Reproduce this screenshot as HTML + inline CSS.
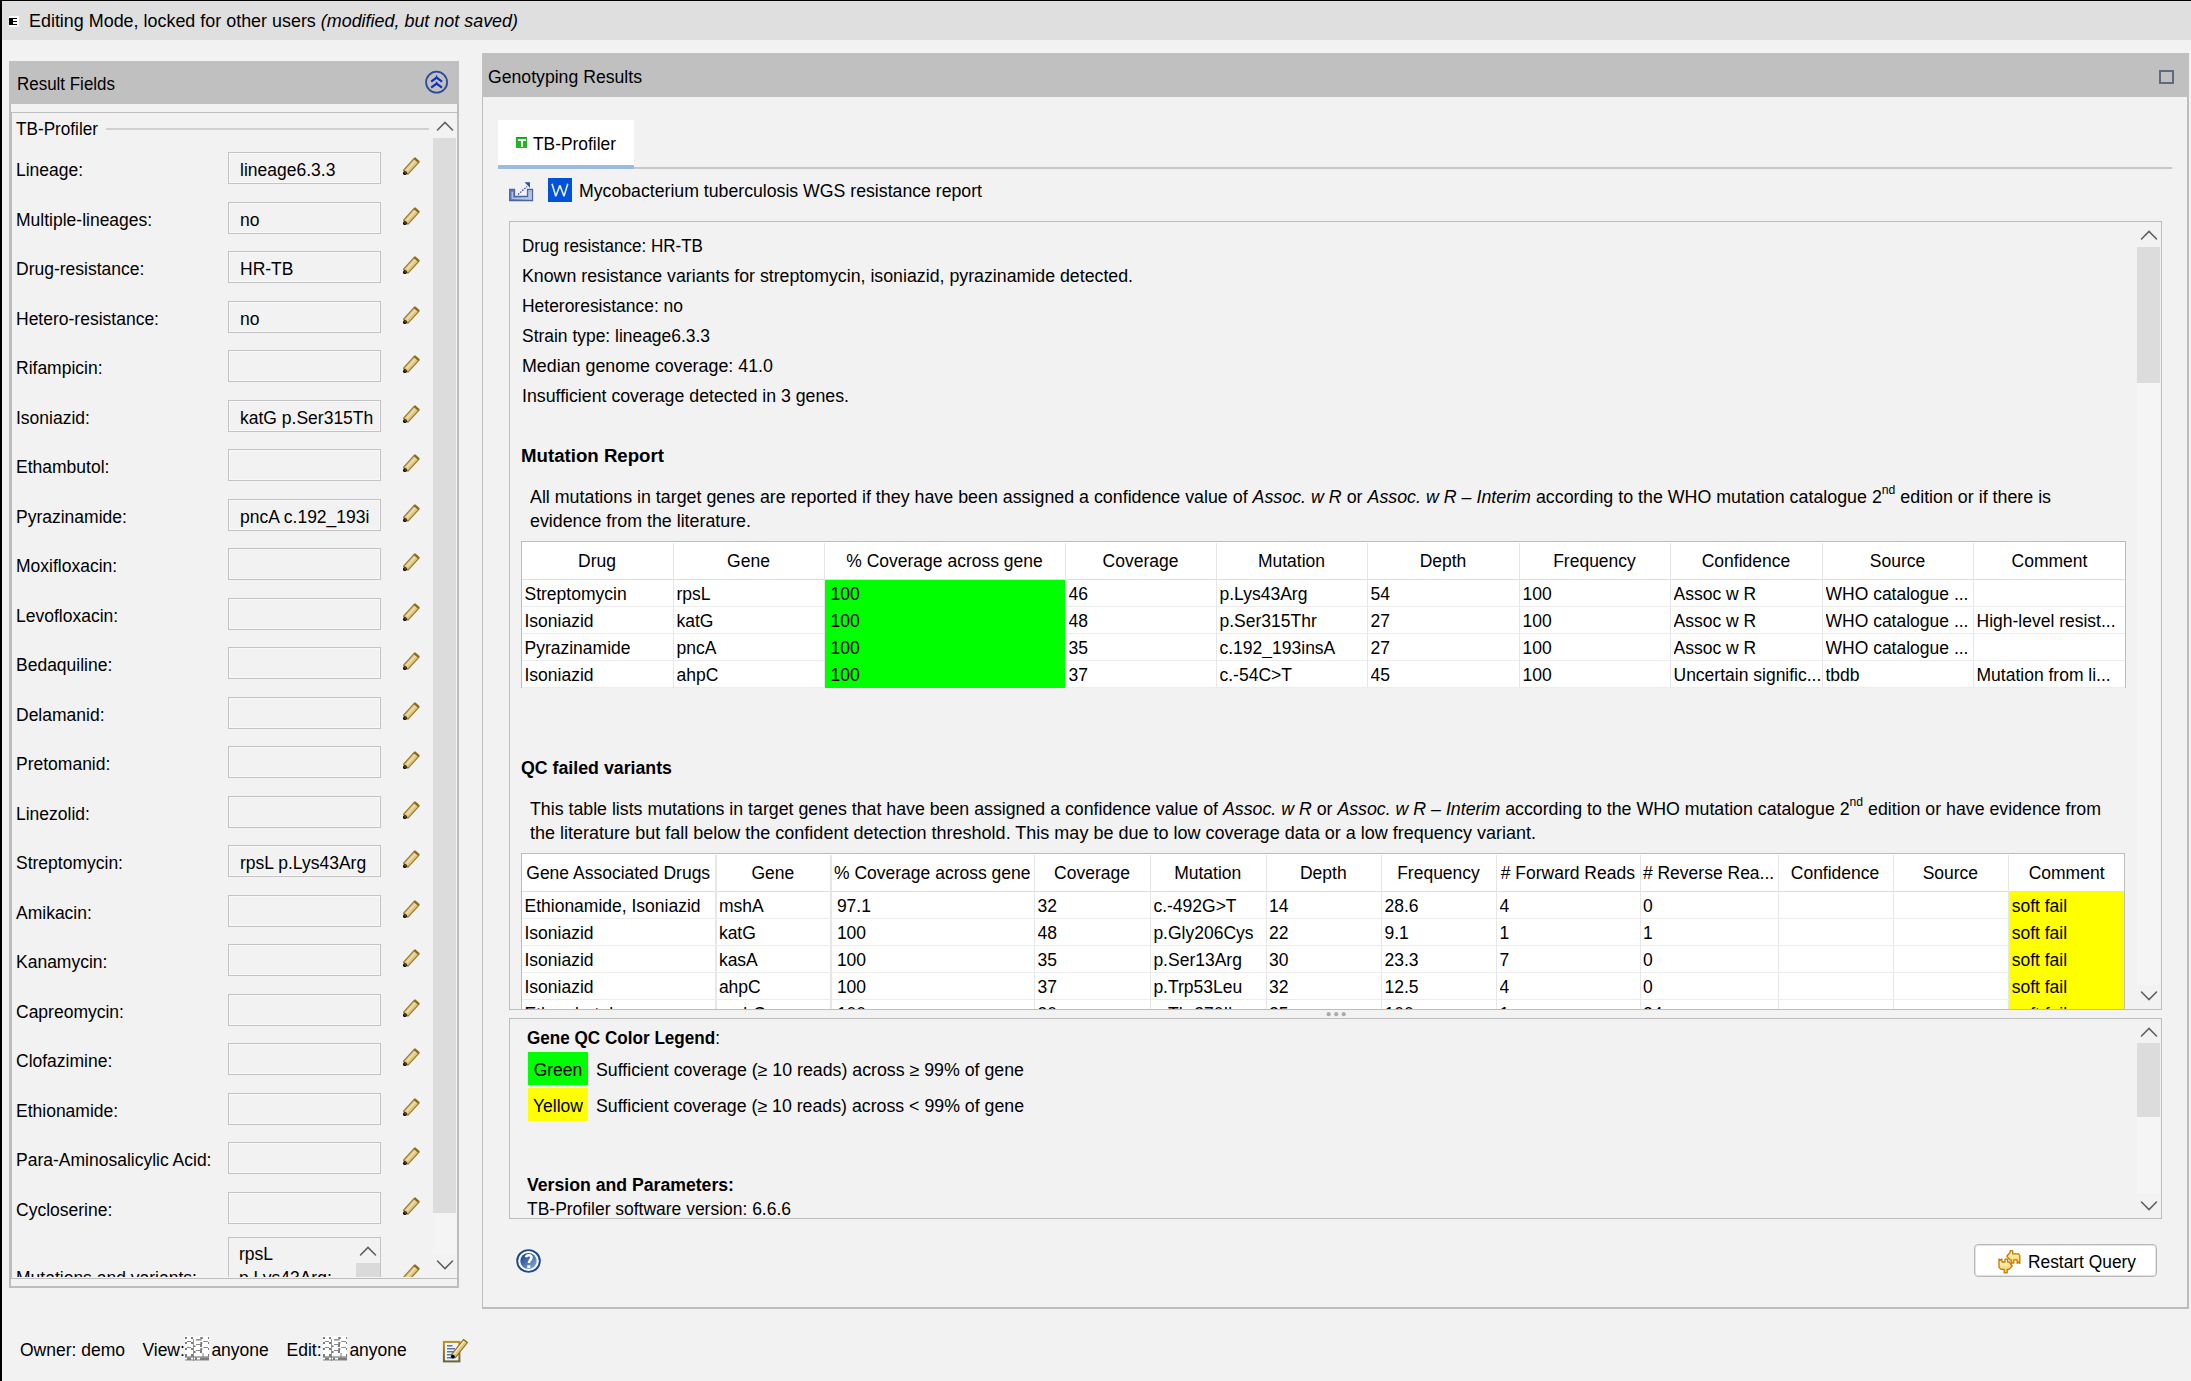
<!DOCTYPE html><html><head><meta charset="utf-8"><style>
*{box-sizing:border-box}
html,body{margin:0;padding:0}
body{width:2191px;height:1381px;overflow:hidden;background:#f2f2f2;position:relative;font-family:"Liberation Sans",sans-serif;font-size:17.5px;color:#000}
.t{position:absolute;white-space:nowrap;line-height:20px}
.r{position:absolute}
.ab{position:absolute}
b{font-weight:bold}
</style></head><body><div class="r" style="left:0px;top:0px;width:2191px;height:1px;background:#000"></div>
<div class="r" style="left:0px;top:0px;width:2px;height:1381px;background:#000"></div>
<div class="r" style="left:2px;top:1px;width:2189px;height:39px;background:#dfdfdf"></div>
<svg class="ab" style="left:9px;top:16px" width="10" height="11" viewBox="0 0 10 11" shape-rendering="crispEdges"><rect width="10" height="11" fill="#fff"/><rect x="0" y="2" width="8" height="7" fill="#000"/><rect x="4" y="3" width="4" height="2" fill="#fff"/><rect x="4" y="6" width="4" height="2" fill="#fff"/></svg>
<div class="t" style="left:28.5px;top:11.0px;transform:scaleX(1.0238);transform-origin:0 0;">Editing Mode, locked for other users <i>(modified, but not saved)</i></div>
<div class="r" style="left:9px;top:61px;width:450px;height:43px;background:#c0c0c0"></div>
<div class="t" style="left:16.5px;top:74.0px;transform:scaleX(0.9688);transform-origin:0 0;">Result Fields</div>
<svg class="ab" style="left:424px;top:70px" width="25" height="25" viewBox="0 0 25 25"><circle cx="12.6" cy="12.2" r="10.5" fill="none" stroke="#2c4a98" stroke-width="1.8"/><path d="M7.2 11.6 L12.6 7.6 L18 11.6 M7.2 17.6 L12.6 13.6 L18 17.6" fill="none" stroke="#0a30c0" stroke-width="2.1"/><path d="M12.6 5.6 V8.6 M12.6 11.8 V14.6" stroke="#0a30c0" stroke-width="1.3"/></svg>
<div class="r" style="left:9px;top:104px;width:2px;height:1184px;background:#bdbdbd"></div>
<div class="r" style="left:457px;top:104px;width:2px;height:1184px;background:#bdbdbd"></div>
<div class="r" style="left:9px;top:1286px;width:450px;height:2px;background:#bdbdbd"></div>
<div class="r" style="left:11px;top:112px;width:446px;height:1px;background:#bdbdbd"></div>
<div class="r" style="left:11px;top:113px;width:1px;height:1166px;background:#bdbdbd"></div>
<div class="r" style="left:11px;top:1278px;width:446px;height:1px;background:#bdbdbd"></div>
<div class="ab" style="left:12px;top:113px;width:445px;height:1164px;overflow:hidden">
<div class="t" style="left:4px;top:6.0px;transform:scaleX(0.9806);transform-origin:0 0;">TB-Profiler</div>
<div class="r" style="left:94px;top:15px;width:323px;height:2px;background:#d0d0d0"></div>
<div class="r" style="left:421px;top:25px;width:23px;height:1075px;background:#dcdcdc"></div>
<div class="r" style="left:421px;top:1100px;width:23px;height:41px;background:#f4f4f4"></div>
<div class="t" style="left:4px;top:47.0px;">Lineage:</div>
<div class="r" style="left:216px;top:39px;width:153px;height:32px;border:1px solid #c3c3c3;box-shadow:inset 0 0 0 1px #f8f8f8"></div>
<div class="t" style="left:228px;top:47.0px;">lineage6.3.3</div>
<div class="ab" style="left:391px;top:44px"><svg width="17" height="19" viewBox="0 0 17 19"><path d="M0.6 13.2 L11.4 1.2 L16 5.2 L5 17.2 Z" fill="#dec583" stroke="#9a7a2c" stroke-width="1.2" stroke-linejoin="round"/><path d="M3.6 13.6 L12.6 3.8" stroke="#f0e0ae" stroke-width="1.5"/><path d="M11.4 1.2 L16 5.2" stroke="#8a6a1e" stroke-width="2.2"/><circle cx="1.9" cy="16.2" r="1.9" fill="#000"/><circle cx="2.1" cy="16" r="0.7" fill="#b89a40"/></svg></div>
<div class="t" style="left:4px;top:97.0px;">Multiple-lineages:</div>
<div class="r" style="left:216px;top:89px;width:153px;height:32px;border:1px solid #c3c3c3;box-shadow:inset 0 0 0 1px #f8f8f8"></div>
<div class="t" style="left:228px;top:97.0px;">no</div>
<div class="ab" style="left:391px;top:94px"><svg width="17" height="19" viewBox="0 0 17 19"><path d="M0.6 13.2 L11.4 1.2 L16 5.2 L5 17.2 Z" fill="#dec583" stroke="#9a7a2c" stroke-width="1.2" stroke-linejoin="round"/><path d="M3.6 13.6 L12.6 3.8" stroke="#f0e0ae" stroke-width="1.5"/><path d="M11.4 1.2 L16 5.2" stroke="#8a6a1e" stroke-width="2.2"/><circle cx="1.9" cy="16.2" r="1.9" fill="#000"/><circle cx="2.1" cy="16" r="0.7" fill="#b89a40"/></svg></div>
<div class="t" style="left:4px;top:146.0px;">Drug-resistance:</div>
<div class="r" style="left:216px;top:138px;width:153px;height:32px;border:1px solid #c3c3c3;box-shadow:inset 0 0 0 1px #f8f8f8"></div>
<div class="t" style="left:228px;top:146.0px;">HR-TB</div>
<div class="ab" style="left:391px;top:143px"><svg width="17" height="19" viewBox="0 0 17 19"><path d="M0.6 13.2 L11.4 1.2 L16 5.2 L5 17.2 Z" fill="#dec583" stroke="#9a7a2c" stroke-width="1.2" stroke-linejoin="round"/><path d="M3.6 13.6 L12.6 3.8" stroke="#f0e0ae" stroke-width="1.5"/><path d="M11.4 1.2 L16 5.2" stroke="#8a6a1e" stroke-width="2.2"/><circle cx="1.9" cy="16.2" r="1.9" fill="#000"/><circle cx="2.1" cy="16" r="0.7" fill="#b89a40"/></svg></div>
<div class="t" style="left:4px;top:196.0px;">Hetero-resistance:</div>
<div class="r" style="left:216px;top:188px;width:153px;height:32px;border:1px solid #c3c3c3;box-shadow:inset 0 0 0 1px #f8f8f8"></div>
<div class="t" style="left:228px;top:196.0px;">no</div>
<div class="ab" style="left:391px;top:193px"><svg width="17" height="19" viewBox="0 0 17 19"><path d="M0.6 13.2 L11.4 1.2 L16 5.2 L5 17.2 Z" fill="#dec583" stroke="#9a7a2c" stroke-width="1.2" stroke-linejoin="round"/><path d="M3.6 13.6 L12.6 3.8" stroke="#f0e0ae" stroke-width="1.5"/><path d="M11.4 1.2 L16 5.2" stroke="#8a6a1e" stroke-width="2.2"/><circle cx="1.9" cy="16.2" r="1.9" fill="#000"/><circle cx="2.1" cy="16" r="0.7" fill="#b89a40"/></svg></div>
<div class="t" style="left:4px;top:245.0px;">Rifampicin:</div>
<div class="r" style="left:216px;top:237px;width:153px;height:32px;border:1px solid #c3c3c3;box-shadow:inset 0 0 0 1px #f8f8f8"></div>
<div class="ab" style="left:391px;top:242px"><svg width="17" height="19" viewBox="0 0 17 19"><path d="M0.6 13.2 L11.4 1.2 L16 5.2 L5 17.2 Z" fill="#dec583" stroke="#9a7a2c" stroke-width="1.2" stroke-linejoin="round"/><path d="M3.6 13.6 L12.6 3.8" stroke="#f0e0ae" stroke-width="1.5"/><path d="M11.4 1.2 L16 5.2" stroke="#8a6a1e" stroke-width="2.2"/><circle cx="1.9" cy="16.2" r="1.9" fill="#000"/><circle cx="2.1" cy="16" r="0.7" fill="#b89a40"/></svg></div>
<div class="t" style="left:4px;top:295.0px;">Isoniazid:</div>
<div class="r" style="left:216px;top:287px;width:153px;height:32px;border:1px solid #c3c3c3;box-shadow:inset 0 0 0 1px #f8f8f8"></div>
<div class="t" style="left:228px;top:295.0px;">katG p.Ser315Th</div>
<div class="ab" style="left:391px;top:292px"><svg width="17" height="19" viewBox="0 0 17 19"><path d="M0.6 13.2 L11.4 1.2 L16 5.2 L5 17.2 Z" fill="#dec583" stroke="#9a7a2c" stroke-width="1.2" stroke-linejoin="round"/><path d="M3.6 13.6 L12.6 3.8" stroke="#f0e0ae" stroke-width="1.5"/><path d="M11.4 1.2 L16 5.2" stroke="#8a6a1e" stroke-width="2.2"/><circle cx="1.9" cy="16.2" r="1.9" fill="#000"/><circle cx="2.1" cy="16" r="0.7" fill="#b89a40"/></svg></div>
<div class="t" style="left:4px;top:344.0px;">Ethambutol:</div>
<div class="r" style="left:216px;top:336px;width:153px;height:32px;border:1px solid #c3c3c3;box-shadow:inset 0 0 0 1px #f8f8f8"></div>
<div class="ab" style="left:391px;top:341px"><svg width="17" height="19" viewBox="0 0 17 19"><path d="M0.6 13.2 L11.4 1.2 L16 5.2 L5 17.2 Z" fill="#dec583" stroke="#9a7a2c" stroke-width="1.2" stroke-linejoin="round"/><path d="M3.6 13.6 L12.6 3.8" stroke="#f0e0ae" stroke-width="1.5"/><path d="M11.4 1.2 L16 5.2" stroke="#8a6a1e" stroke-width="2.2"/><circle cx="1.9" cy="16.2" r="1.9" fill="#000"/><circle cx="2.1" cy="16" r="0.7" fill="#b89a40"/></svg></div>
<div class="t" style="left:4px;top:394.0px;">Pyrazinamide:</div>
<div class="r" style="left:216px;top:386px;width:153px;height:32px;border:1px solid #c3c3c3;box-shadow:inset 0 0 0 1px #f8f8f8"></div>
<div class="t" style="left:228px;top:394.0px;">pncA c.192_193i</div>
<div class="ab" style="left:391px;top:391px"><svg width="17" height="19" viewBox="0 0 17 19"><path d="M0.6 13.2 L11.4 1.2 L16 5.2 L5 17.2 Z" fill="#dec583" stroke="#9a7a2c" stroke-width="1.2" stroke-linejoin="round"/><path d="M3.6 13.6 L12.6 3.8" stroke="#f0e0ae" stroke-width="1.5"/><path d="M11.4 1.2 L16 5.2" stroke="#8a6a1e" stroke-width="2.2"/><circle cx="1.9" cy="16.2" r="1.9" fill="#000"/><circle cx="2.1" cy="16" r="0.7" fill="#b89a40"/></svg></div>
<div class="t" style="left:4px;top:443.0px;">Moxifloxacin:</div>
<div class="r" style="left:216px;top:435px;width:153px;height:32px;border:1px solid #c3c3c3;box-shadow:inset 0 0 0 1px #f8f8f8"></div>
<div class="ab" style="left:391px;top:440px"><svg width="17" height="19" viewBox="0 0 17 19"><path d="M0.6 13.2 L11.4 1.2 L16 5.2 L5 17.2 Z" fill="#dec583" stroke="#9a7a2c" stroke-width="1.2" stroke-linejoin="round"/><path d="M3.6 13.6 L12.6 3.8" stroke="#f0e0ae" stroke-width="1.5"/><path d="M11.4 1.2 L16 5.2" stroke="#8a6a1e" stroke-width="2.2"/><circle cx="1.9" cy="16.2" r="1.9" fill="#000"/><circle cx="2.1" cy="16" r="0.7" fill="#b89a40"/></svg></div>
<div class="t" style="left:4px;top:493.0px;">Levofloxacin:</div>
<div class="r" style="left:216px;top:485px;width:153px;height:32px;border:1px solid #c3c3c3;box-shadow:inset 0 0 0 1px #f8f8f8"></div>
<div class="ab" style="left:391px;top:490px"><svg width="17" height="19" viewBox="0 0 17 19"><path d="M0.6 13.2 L11.4 1.2 L16 5.2 L5 17.2 Z" fill="#dec583" stroke="#9a7a2c" stroke-width="1.2" stroke-linejoin="round"/><path d="M3.6 13.6 L12.6 3.8" stroke="#f0e0ae" stroke-width="1.5"/><path d="M11.4 1.2 L16 5.2" stroke="#8a6a1e" stroke-width="2.2"/><circle cx="1.9" cy="16.2" r="1.9" fill="#000"/><circle cx="2.1" cy="16" r="0.7" fill="#b89a40"/></svg></div>
<div class="t" style="left:4px;top:542.0px;">Bedaquiline:</div>
<div class="r" style="left:216px;top:534px;width:153px;height:32px;border:1px solid #c3c3c3;box-shadow:inset 0 0 0 1px #f8f8f8"></div>
<div class="ab" style="left:391px;top:539px"><svg width="17" height="19" viewBox="0 0 17 19"><path d="M0.6 13.2 L11.4 1.2 L16 5.2 L5 17.2 Z" fill="#dec583" stroke="#9a7a2c" stroke-width="1.2" stroke-linejoin="round"/><path d="M3.6 13.6 L12.6 3.8" stroke="#f0e0ae" stroke-width="1.5"/><path d="M11.4 1.2 L16 5.2" stroke="#8a6a1e" stroke-width="2.2"/><circle cx="1.9" cy="16.2" r="1.9" fill="#000"/><circle cx="2.1" cy="16" r="0.7" fill="#b89a40"/></svg></div>
<div class="t" style="left:4px;top:592.0px;">Delamanid:</div>
<div class="r" style="left:216px;top:584px;width:153px;height:32px;border:1px solid #c3c3c3;box-shadow:inset 0 0 0 1px #f8f8f8"></div>
<div class="ab" style="left:391px;top:589px"><svg width="17" height="19" viewBox="0 0 17 19"><path d="M0.6 13.2 L11.4 1.2 L16 5.2 L5 17.2 Z" fill="#dec583" stroke="#9a7a2c" stroke-width="1.2" stroke-linejoin="round"/><path d="M3.6 13.6 L12.6 3.8" stroke="#f0e0ae" stroke-width="1.5"/><path d="M11.4 1.2 L16 5.2" stroke="#8a6a1e" stroke-width="2.2"/><circle cx="1.9" cy="16.2" r="1.9" fill="#000"/><circle cx="2.1" cy="16" r="0.7" fill="#b89a40"/></svg></div>
<div class="t" style="left:4px;top:641.0px;">Pretomanid:</div>
<div class="r" style="left:216px;top:633px;width:153px;height:32px;border:1px solid #c3c3c3;box-shadow:inset 0 0 0 1px #f8f8f8"></div>
<div class="ab" style="left:391px;top:638px"><svg width="17" height="19" viewBox="0 0 17 19"><path d="M0.6 13.2 L11.4 1.2 L16 5.2 L5 17.2 Z" fill="#dec583" stroke="#9a7a2c" stroke-width="1.2" stroke-linejoin="round"/><path d="M3.6 13.6 L12.6 3.8" stroke="#f0e0ae" stroke-width="1.5"/><path d="M11.4 1.2 L16 5.2" stroke="#8a6a1e" stroke-width="2.2"/><circle cx="1.9" cy="16.2" r="1.9" fill="#000"/><circle cx="2.1" cy="16" r="0.7" fill="#b89a40"/></svg></div>
<div class="t" style="left:4px;top:691.0px;">Linezolid:</div>
<div class="r" style="left:216px;top:683px;width:153px;height:32px;border:1px solid #c3c3c3;box-shadow:inset 0 0 0 1px #f8f8f8"></div>
<div class="ab" style="left:391px;top:688px"><svg width="17" height="19" viewBox="0 0 17 19"><path d="M0.6 13.2 L11.4 1.2 L16 5.2 L5 17.2 Z" fill="#dec583" stroke="#9a7a2c" stroke-width="1.2" stroke-linejoin="round"/><path d="M3.6 13.6 L12.6 3.8" stroke="#f0e0ae" stroke-width="1.5"/><path d="M11.4 1.2 L16 5.2" stroke="#8a6a1e" stroke-width="2.2"/><circle cx="1.9" cy="16.2" r="1.9" fill="#000"/><circle cx="2.1" cy="16" r="0.7" fill="#b89a40"/></svg></div>
<div class="t" style="left:4px;top:740.0px;">Streptomycin:</div>
<div class="r" style="left:216px;top:732px;width:153px;height:32px;border:1px solid #c3c3c3;box-shadow:inset 0 0 0 1px #f8f8f8"></div>
<div class="t" style="left:228px;top:740.0px;">rpsL p.Lys43Arg</div>
<div class="ab" style="left:391px;top:737px"><svg width="17" height="19" viewBox="0 0 17 19"><path d="M0.6 13.2 L11.4 1.2 L16 5.2 L5 17.2 Z" fill="#dec583" stroke="#9a7a2c" stroke-width="1.2" stroke-linejoin="round"/><path d="M3.6 13.6 L12.6 3.8" stroke="#f0e0ae" stroke-width="1.5"/><path d="M11.4 1.2 L16 5.2" stroke="#8a6a1e" stroke-width="2.2"/><circle cx="1.9" cy="16.2" r="1.9" fill="#000"/><circle cx="2.1" cy="16" r="0.7" fill="#b89a40"/></svg></div>
<div class="t" style="left:4px;top:790.0px;">Amikacin:</div>
<div class="r" style="left:216px;top:782px;width:153px;height:32px;border:1px solid #c3c3c3;box-shadow:inset 0 0 0 1px #f8f8f8"></div>
<div class="ab" style="left:391px;top:787px"><svg width="17" height="19" viewBox="0 0 17 19"><path d="M0.6 13.2 L11.4 1.2 L16 5.2 L5 17.2 Z" fill="#dec583" stroke="#9a7a2c" stroke-width="1.2" stroke-linejoin="round"/><path d="M3.6 13.6 L12.6 3.8" stroke="#f0e0ae" stroke-width="1.5"/><path d="M11.4 1.2 L16 5.2" stroke="#8a6a1e" stroke-width="2.2"/><circle cx="1.9" cy="16.2" r="1.9" fill="#000"/><circle cx="2.1" cy="16" r="0.7" fill="#b89a40"/></svg></div>
<div class="t" style="left:4px;top:839.0px;">Kanamycin:</div>
<div class="r" style="left:216px;top:831px;width:153px;height:32px;border:1px solid #c3c3c3;box-shadow:inset 0 0 0 1px #f8f8f8"></div>
<div class="ab" style="left:391px;top:836px"><svg width="17" height="19" viewBox="0 0 17 19"><path d="M0.6 13.2 L11.4 1.2 L16 5.2 L5 17.2 Z" fill="#dec583" stroke="#9a7a2c" stroke-width="1.2" stroke-linejoin="round"/><path d="M3.6 13.6 L12.6 3.8" stroke="#f0e0ae" stroke-width="1.5"/><path d="M11.4 1.2 L16 5.2" stroke="#8a6a1e" stroke-width="2.2"/><circle cx="1.9" cy="16.2" r="1.9" fill="#000"/><circle cx="2.1" cy="16" r="0.7" fill="#b89a40"/></svg></div>
<div class="t" style="left:4px;top:889.0px;">Capreomycin:</div>
<div class="r" style="left:216px;top:881px;width:153px;height:32px;border:1px solid #c3c3c3;box-shadow:inset 0 0 0 1px #f8f8f8"></div>
<div class="ab" style="left:391px;top:886px"><svg width="17" height="19" viewBox="0 0 17 19"><path d="M0.6 13.2 L11.4 1.2 L16 5.2 L5 17.2 Z" fill="#dec583" stroke="#9a7a2c" stroke-width="1.2" stroke-linejoin="round"/><path d="M3.6 13.6 L12.6 3.8" stroke="#f0e0ae" stroke-width="1.5"/><path d="M11.4 1.2 L16 5.2" stroke="#8a6a1e" stroke-width="2.2"/><circle cx="1.9" cy="16.2" r="1.9" fill="#000"/><circle cx="2.1" cy="16" r="0.7" fill="#b89a40"/></svg></div>
<div class="t" style="left:4px;top:938.0px;">Clofazimine:</div>
<div class="r" style="left:216px;top:930px;width:153px;height:32px;border:1px solid #c3c3c3;box-shadow:inset 0 0 0 1px #f8f8f8"></div>
<div class="ab" style="left:391px;top:935px"><svg width="17" height="19" viewBox="0 0 17 19"><path d="M0.6 13.2 L11.4 1.2 L16 5.2 L5 17.2 Z" fill="#dec583" stroke="#9a7a2c" stroke-width="1.2" stroke-linejoin="round"/><path d="M3.6 13.6 L12.6 3.8" stroke="#f0e0ae" stroke-width="1.5"/><path d="M11.4 1.2 L16 5.2" stroke="#8a6a1e" stroke-width="2.2"/><circle cx="1.9" cy="16.2" r="1.9" fill="#000"/><circle cx="2.1" cy="16" r="0.7" fill="#b89a40"/></svg></div>
<div class="t" style="left:4px;top:988.0px;">Ethionamide:</div>
<div class="r" style="left:216px;top:980px;width:153px;height:32px;border:1px solid #c3c3c3;box-shadow:inset 0 0 0 1px #f8f8f8"></div>
<div class="ab" style="left:391px;top:985px"><svg width="17" height="19" viewBox="0 0 17 19"><path d="M0.6 13.2 L11.4 1.2 L16 5.2 L5 17.2 Z" fill="#dec583" stroke="#9a7a2c" stroke-width="1.2" stroke-linejoin="round"/><path d="M3.6 13.6 L12.6 3.8" stroke="#f0e0ae" stroke-width="1.5"/><path d="M11.4 1.2 L16 5.2" stroke="#8a6a1e" stroke-width="2.2"/><circle cx="1.9" cy="16.2" r="1.9" fill="#000"/><circle cx="2.1" cy="16" r="0.7" fill="#b89a40"/></svg></div>
<div class="t" style="left:4px;top:1037.0px;">Para-Aminosalicylic Acid:</div>
<div class="r" style="left:216px;top:1029px;width:153px;height:32px;border:1px solid #c3c3c3;box-shadow:inset 0 0 0 1px #f8f8f8"></div>
<div class="ab" style="left:391px;top:1034px"><svg width="17" height="19" viewBox="0 0 17 19"><path d="M0.6 13.2 L11.4 1.2 L16 5.2 L5 17.2 Z" fill="#dec583" stroke="#9a7a2c" stroke-width="1.2" stroke-linejoin="round"/><path d="M3.6 13.6 L12.6 3.8" stroke="#f0e0ae" stroke-width="1.5"/><path d="M11.4 1.2 L16 5.2" stroke="#8a6a1e" stroke-width="2.2"/><circle cx="1.9" cy="16.2" r="1.9" fill="#000"/><circle cx="2.1" cy="16" r="0.7" fill="#b89a40"/></svg></div>
<div class="t" style="left:4px;top:1087.0px;">Cycloserine:</div>
<div class="r" style="left:216px;top:1079px;width:153px;height:32px;border:1px solid #c3c3c3;box-shadow:inset 0 0 0 1px #f8f8f8"></div>
<div class="ab" style="left:391px;top:1084px"><svg width="17" height="19" viewBox="0 0 17 19"><path d="M0.6 13.2 L11.4 1.2 L16 5.2 L5 17.2 Z" fill="#dec583" stroke="#9a7a2c" stroke-width="1.2" stroke-linejoin="round"/><path d="M3.6 13.6 L12.6 3.8" stroke="#f0e0ae" stroke-width="1.5"/><path d="M11.4 1.2 L16 5.2" stroke="#8a6a1e" stroke-width="2.2"/><circle cx="1.9" cy="16.2" r="1.9" fill="#000"/><circle cx="2.1" cy="16" r="0.7" fill="#b89a40"/></svg></div>
<div class="t" style="left:4px;top:1155.0px;">Mutations and variants:</div>
<div class="r" style="left:216px;top:1124px;width:153px;height:53px;border:1px solid #c3c3c3"></div>
<div class="t" style="left:227px;top:1131.0px;">rpsL</div>
<div class="t" style="left:227px;top:1155.0px;">p.Lys43Arg;</div>
<div class="r" style="left:344px;top:1149.5px;width:24px;height:27.5px;background:#dadada"></div>
<svg class="ab" style="left:346px;top:1131px" width="20" height="14" viewBox="0 0 20 14"><path d="M2.5 11 L10 3.5 L17.5 11" fill="none" stroke="#606060" stroke-width="1.6" stroke-linecap="round"/></svg>
<div class="ab" style="left:391px;top:1151px"><svg width="17" height="19" viewBox="0 0 17 19"><path d="M0.6 13.2 L11.4 1.2 L16 5.2 L5 17.2 Z" fill="#dec583" stroke="#9a7a2c" stroke-width="1.2" stroke-linejoin="round"/><path d="M3.6 13.6 L12.6 3.8" stroke="#f0e0ae" stroke-width="1.5"/><path d="M11.4 1.2 L16 5.2" stroke="#8a6a1e" stroke-width="2.2"/><circle cx="1.9" cy="16.2" r="1.9" fill="#000"/><circle cx="2.1" cy="16" r="0.7" fill="#b89a40"/></svg></div>
</div>
<svg class="ab" style="left:435px;top:119px" width="20" height="14" viewBox="0 0 20 14"><path d="M2.5 11 L10 3.5 L17.5 11" fill="none" stroke="#606060" stroke-width="1.6" stroke-linecap="round"/></svg>
<svg class="ab" style="left:435px;top:1258px" width="20" height="14" viewBox="0 0 20 14"><path d="M2.5 3 L10 10.5 L17.5 3" fill="none" stroke="#606060" stroke-width="1.6" stroke-linecap="round"/></svg>
<div class="t" style="left:20px;top:1340.0px;">Owner: demo</div>
<div class="t" style="left:142.4px;top:1340.0px;">View:</div>
<div class="t" style="left:211.4px;top:1340.0px;">anyone</div>
<div class="t" style="left:286.5px;top:1340.0px;">Edit:</div>
<div class="t" style="left:349.4px;top:1340.0px;">anyone</div>
<div class="ab" style="left:185px;top:1336px"><svg width="24" height="25" viewBox="0 0 24 25"><rect x="0" y="0" width="24" height="25" fill="#fff"/><rect x="0" y="1" width="2" height="2" fill="#7c7c7c"/><rect x="6" y="1" width="2" height="2" fill="#7c7c7c"/><rect x="15.3" y="1" width="2.5" height="2" fill="#7c7c7c"/><rect x="23" y="1" width="1" height="2" fill="#7c7c7c"/><rect x="8" y="3" width="0.8" height="22" fill="#7c7c7c"/><rect x="11" y="3.2" width="5.6" height="1.3" fill="#7c7c7c"/><rect x="2" y="5" width="4" height="0.9" fill="#7c7c7c"/><rect x="18.3" y="5" width="4.7" height="0.9" fill="#7c7c7c"/><rect x="0" y="6" width="2" height="2" fill="#7c7c7c"/><rect x="6" y="6" width="2" height="2" fill="#7c7c7c"/><rect x="15.3" y="6" width="2" height="2" fill="#7c7c7c"/><rect x="23" y="6" width="1" height="2" fill="#7c7c7c"/><rect x="11" y="8.1" width="5.6" height="0.9" fill="#7c7c7c"/><rect x="9" y="9.5" width="1.6" height="1.5" fill="#7c7c7c"/><rect x="15" y="8" width="2" height="3" fill="#7c7c7c"/><rect x="2" y="11" width="4" height="0.9" fill="#7c7c7c"/><rect x="18.3" y="11" width="4.7" height="0.9" fill="#7c7c7c"/><rect x="0" y="12" width="2" height="2" fill="#7c7c7c"/><rect x="6" y="12" width="2" height="2" fill="#7c7c7c"/><rect x="15.3" y="12" width="2" height="2" fill="#7c7c7c"/><rect x="23" y="12" width="1" height="2" fill="#7c7c7c"/><rect x="11" y="14.1" width="5.6" height="0.9" fill="#7c7c7c"/><rect x="9" y="15" width="1.6" height="2" fill="#7c7c7c"/><rect x="15" y="14" width="2" height="3" fill="#7c7c7c"/><rect x="0" y="18" width="2" height="3" fill="#7c7c7c"/><rect x="6" y="18" width="2" height="3" fill="#7c7c7c"/><rect x="17.5" y="17" width="1" height="4" fill="#7c7c7c"/><rect x="23" y="18" width="1" height="3" fill="#7c7c7c"/><rect x="0" y="20.4" width="24" height="1.2" fill="#7c7c7c"/><rect x="2" y="21.5" width="4" height="2.5" fill="#7c7c7c"/><rect x="10" y="21.5" width="2" height="2.5" fill="#7c7c7c"/><rect x="15" y="21.5" width="9" height="2.5" fill="#7c7c7c"/><rect x="0" y="23.5" width="24" height="1" fill="#7c7c7c"/></svg></div>
<div class="ab" style="left:323px;top:1336px"><svg width="24" height="25" viewBox="0 0 24 25"><rect x="0" y="0" width="24" height="25" fill="#fff"/><rect x="0" y="1" width="2" height="2" fill="#7c7c7c"/><rect x="6" y="1" width="2" height="2" fill="#7c7c7c"/><rect x="15.3" y="1" width="2.5" height="2" fill="#7c7c7c"/><rect x="23" y="1" width="1" height="2" fill="#7c7c7c"/><rect x="8" y="3" width="0.8" height="22" fill="#7c7c7c"/><rect x="11" y="3.2" width="5.6" height="1.3" fill="#7c7c7c"/><rect x="2" y="5" width="4" height="0.9" fill="#7c7c7c"/><rect x="18.3" y="5" width="4.7" height="0.9" fill="#7c7c7c"/><rect x="0" y="6" width="2" height="2" fill="#7c7c7c"/><rect x="6" y="6" width="2" height="2" fill="#7c7c7c"/><rect x="15.3" y="6" width="2" height="2" fill="#7c7c7c"/><rect x="23" y="6" width="1" height="2" fill="#7c7c7c"/><rect x="11" y="8.1" width="5.6" height="0.9" fill="#7c7c7c"/><rect x="9" y="9.5" width="1.6" height="1.5" fill="#7c7c7c"/><rect x="15" y="8" width="2" height="3" fill="#7c7c7c"/><rect x="2" y="11" width="4" height="0.9" fill="#7c7c7c"/><rect x="18.3" y="11" width="4.7" height="0.9" fill="#7c7c7c"/><rect x="0" y="12" width="2" height="2" fill="#7c7c7c"/><rect x="6" y="12" width="2" height="2" fill="#7c7c7c"/><rect x="15.3" y="12" width="2" height="2" fill="#7c7c7c"/><rect x="23" y="12" width="1" height="2" fill="#7c7c7c"/><rect x="11" y="14.1" width="5.6" height="0.9" fill="#7c7c7c"/><rect x="9" y="15" width="1.6" height="2" fill="#7c7c7c"/><rect x="15" y="14" width="2" height="3" fill="#7c7c7c"/><rect x="0" y="18" width="2" height="3" fill="#7c7c7c"/><rect x="6" y="18" width="2" height="3" fill="#7c7c7c"/><rect x="17.5" y="17" width="1" height="4" fill="#7c7c7c"/><rect x="23" y="18" width="1" height="3" fill="#7c7c7c"/><rect x="0" y="20.4" width="24" height="1.2" fill="#7c7c7c"/><rect x="2" y="21.5" width="4" height="2.5" fill="#7c7c7c"/><rect x="10" y="21.5" width="2" height="2.5" fill="#7c7c7c"/><rect x="15" y="21.5" width="9" height="2.5" fill="#7c7c7c"/><rect x="0" y="23.5" width="24" height="1" fill="#7c7c7c"/></svg></div>
<svg class="ab" style="left:442px;top:1336px" width="27" height="27" viewBox="0 0 27 27"><defs><linearGradient id="npg" x1="0" y1="0" x2="0" y2="1"><stop offset="0" stop-color="#c0901c"/><stop offset="1" stop-color="#6e6432"/></linearGradient></defs><rect x="1.9" y="5.9" width="15.5" height="19.5" fill="#eef4fd" stroke="url(#npg)" stroke-width="2"/><path d="M5 9.8h5.5M5 12.8h8M5 15.8h7M5 18.8h11M5 21.8h8" stroke="#5b76ad" stroke-width="1.5"/><path d="M9.5 18.5 L21.5 3.5 L25.5 6.5 L13.5 21.5 Z" fill="#e0c47e" stroke="#8a6c22" stroke-width="1.2" stroke-linejoin="round"/><path d="M12 18.2 L22 5.5" stroke="#f4e6b8" stroke-width="1.3"/><circle cx="10.8" cy="20.6" r="1.9" fill="#000"/></svg>
<div class="r" style="left:482px;top:53px;width:1707px;height:44px;background:#c0c0c0"></div>
<div class="r" style="left:482px;top:97px;width:1px;height:1212px;background:#bdbdbd"></div>
<div class="r" style="left:2187px;top:97px;width:2px;height:1212px;background:#bdbdbd"></div>
<div class="r" style="left:482px;top:1307px;width:1707px;height:2px;background:#bdbdbd"></div>
<div class="t" style="left:488px;top:67.0px;transform:scaleX(1.0083);transform-origin:0 0;">Genotyping Results</div>
<div class="r" style="left:2159px;top:70px;width:15px;height:14px;border:2.5px solid #5f6a80"></div>
<div class="r" style="left:498px;top:120px;width:136px;height:45px;background:#fff"></div>
<div class="r" style="left:498px;top:165px;width:136px;height:4px;background:#9bbbe0"></div>
<div class="r" style="left:634px;top:167px;width:1538px;height:2px;background:#c8c8c8"></div>
<svg class="ab" style="left:516px;top:137px" width="11" height="11" viewBox="0 0 11 11"><rect width="11" height="11" fill="#1cb81c"/><rect x="0" y="0" width="11" height="1" fill="#08a808"/><rect x="2" y="2.1" width="8" height="1.9" fill="#fff"/><rect x="5" y="4" width="2" height="6" fill="#fff"/></svg>
<div class="t" style="left:533px;top:134.0px;transform:scaleX(0.9925);transform-origin:0 0;">TB-Profiler</div>
<svg class="ab" style="left:509px;top:180px" width="25" height="22" viewBox="0 0 25 22"><defs><linearGradient id="exg" x1="0" y1="0" x2="1" y2="0"><stop offset="0" stop-color="#5a78b4"/><stop offset="1" stop-color="#a8bede"/></linearGradient></defs><path d="M0.6 9.4 H5.6 V16.4 H18.4 V9.4 H23.6 V20.6 H0.6 Z" fill="url(#exg)" stroke="#4a62a0" stroke-width="1.1"/><path d="M3.2 12 V18.2 H21 V12" fill="none" stroke="#c4d2ea" stroke-width="1.1"/><path d="M9 14.5 L18 6.5" stroke="#2e3a98" stroke-width="1.2" stroke-dasharray="1.6 1.2"/><path d="M15.5 2.3 H21 V7.8 Z" fill="#1e5c9c"/></svg>
<svg class="ab" style="left:548px;top:178px" width="24" height="24" viewBox="0 0 24 24"><rect width="24" height="24" fill="#0052d9"/><path d="M4 5.8 L7.8 18.2 L11.9 7.4 L16 18.2 L19.8 5.8" fill="none" stroke="#fff" stroke-width="1.6" stroke-linejoin="bevel" opacity="0.88"/></svg>
<div class="t" style="left:579px;top:181.0px;transform:scaleX(1.0107);transform-origin:0 0;">Mycobacterium tuberculosis WGS resistance report</div>
<div class="r" style="left:509px;top:221px;width:1653px;height:789px;border:1px solid #bdbdbd"></div>
<div class="ab" style="left:510px;top:222px;width:1626px;height:787px;overflow:hidden">
<div class="t" style="left:11.5px;top:14.0px;transform:scaleX(0.9744);transform-origin:0 0;">Drug resistance: HR-TB</div>
<div class="t" style="left:11.5px;top:44.0px;transform:scaleX(1.0148);transform-origin:0 0;">Known resistance variants for streptomycin, isoniazid, pyrazinamide detected.</div>
<div class="t" style="left:11.5px;top:74.0px;transform:scaleX(0.9970);transform-origin:0 0;">Heteroresistance: no</div>
<div class="t" style="left:11.5px;top:104.0px;transform:scaleX(0.9960);transform-origin:0 0;">Strain type: lineage6.3.3</div>
<div class="t" style="left:11.5px;top:134.0px;transform:scaleX(1.0197);transform-origin:0 0;">Median genome coverage: 41.0</div>
<div class="t" style="left:11.5px;top:164.0px;transform:scaleX(1.0134);transform-origin:0 0;">Insufficient coverage detected in 3 genes.</div>
<div class="t" style="left:11.0px;top:224.0px;transform:scaleX(1.0659);transform-origin:0 0;"><b>Mutation Report</b></div>
<div class="t" style="left:20.4px;top:265.0px;transform:scaleX(1.0188);transform-origin:0 0;">All mutations in target genes are reported if they have been assigned a confidence value of <i>Assoc. w R</i> or <i>Assoc. w R – Interim</i> according to the WHO mutation catalogue 2<sup style="font-size:12px;vertical-align:0;position:relative;top:-9px">nd</sup> edition or if there is</div>
<div class="t" style="left:20.4px;top:289.0px;transform:scaleX(1.0188);transform-origin:0 0;">evidence from the literature.</div>
<div class="r" style="left:11.0px;top:319.0px;width:1605.0px;height:147.0px;background:#fff;border:1px solid #bcbcbc"></div>
<div class="r" style="left:12.0px;top:357.0px;width:1603.0px;height:1.0px;background:#dedede"></div>
<div class="r" style="left:163.0px;top:321.0px;width:1.2px;height:144.0px;background:#e6e6e6"></div>
<div class="r" style="left:314.0px;top:321.0px;width:1.2px;height:144.0px;background:#e6e6e6"></div>
<div class="r" style="left:555.0px;top:321.0px;width:1.2px;height:144.0px;background:#e6e6e6"></div>
<div class="r" style="left:706.0px;top:321.0px;width:1.2px;height:144.0px;background:#e6e6e6"></div>
<div class="r" style="left:857.0px;top:321.0px;width:1.2px;height:144.0px;background:#e6e6e6"></div>
<div class="r" style="left:1009.0px;top:321.0px;width:1.2px;height:144.0px;background:#e6e6e6"></div>
<div class="r" style="left:1160.0px;top:321.0px;width:1.2px;height:144.0px;background:#e6e6e6"></div>
<div class="r" style="left:1312.0px;top:321.0px;width:1.2px;height:144.0px;background:#e6e6e6"></div>
<div class="r" style="left:1463.0px;top:321.0px;width:1.2px;height:144.0px;background:#e6e6e6"></div>
<div class="r" style="left:12.0px;top:384.0px;width:1603.0px;height:1.0px;background:#ececec"></div>
<div class="t" style="left:14.5px;top:362.0px;width:148.5px;overflow:hidden">Streptomycin</div>
<div class="t" style="left:166.5px;top:362.0px;width:147.5px;overflow:hidden">rpsL</div>
<div class="r" style="left:315.0px;top:358.0px;width:240.0px;height:26.5px;background:#00ff00"></div>
<div class="t" style="left:320.5px;top:362.0px;width:234.5px;overflow:hidden">100</div>
<div class="t" style="left:558.5px;top:362.0px;width:147.5px;overflow:hidden">46</div>
<div class="t" style="left:709.5px;top:362.0px;width:147.5px;overflow:hidden">p.Lys43Arg</div>
<div class="t" style="left:860.5px;top:362.0px;width:148.5px;overflow:hidden">54</div>
<div class="t" style="left:1012.5px;top:362.0px;width:147.5px;overflow:hidden">100</div>
<div class="t" style="left:1163.5px;top:362.0px;width:148.5px;overflow:hidden">Assoc w R</div>
<div class="t" style="left:1315.5px;top:362.0px;width:147.5px;overflow:hidden">WHO catalogue ...</div>
<div class="r" style="left:12.0px;top:411.0px;width:1603.0px;height:1.0px;background:#ececec"></div>
<div class="t" style="left:14.5px;top:389.0px;width:148.5px;overflow:hidden">Isoniazid</div>
<div class="t" style="left:166.5px;top:389.0px;width:147.5px;overflow:hidden">katG</div>
<div class="r" style="left:315.0px;top:385.0px;width:240.0px;height:26.5px;background:#00ff00"></div>
<div class="t" style="left:320.5px;top:389.0px;width:234.5px;overflow:hidden">100</div>
<div class="t" style="left:558.5px;top:389.0px;width:147.5px;overflow:hidden">48</div>
<div class="t" style="left:709.5px;top:389.0px;width:147.5px;overflow:hidden">p.Ser315Thr</div>
<div class="t" style="left:860.5px;top:389.0px;width:148.5px;overflow:hidden">27</div>
<div class="t" style="left:1012.5px;top:389.0px;width:147.5px;overflow:hidden">100</div>
<div class="t" style="left:1163.5px;top:389.0px;width:148.5px;overflow:hidden">Assoc w R</div>
<div class="t" style="left:1315.5px;top:389.0px;width:147.5px;overflow:hidden">WHO catalogue ...</div>
<div class="t" style="left:1466.5px;top:389.0px;width:149.5px;overflow:hidden">High-level resist...</div>
<div class="r" style="left:12.0px;top:438.0px;width:1603.0px;height:1.0px;background:#ececec"></div>
<div class="t" style="left:14.5px;top:416.0px;width:148.5px;overflow:hidden">Pyrazinamide</div>
<div class="t" style="left:166.5px;top:416.0px;width:147.5px;overflow:hidden">pncA</div>
<div class="r" style="left:315.0px;top:412.0px;width:240.0px;height:26.5px;background:#00ff00"></div>
<div class="t" style="left:320.5px;top:416.0px;width:234.5px;overflow:hidden">100</div>
<div class="t" style="left:558.5px;top:416.0px;width:147.5px;overflow:hidden">35</div>
<div class="t" style="left:709.5px;top:416.0px;width:147.5px;overflow:hidden">c.192_193insA</div>
<div class="t" style="left:860.5px;top:416.0px;width:148.5px;overflow:hidden">27</div>
<div class="t" style="left:1012.5px;top:416.0px;width:147.5px;overflow:hidden">100</div>
<div class="t" style="left:1163.5px;top:416.0px;width:148.5px;overflow:hidden">Assoc w R</div>
<div class="t" style="left:1315.5px;top:416.0px;width:147.5px;overflow:hidden">WHO catalogue ...</div>
<div class="r" style="left:12.0px;top:465.0px;width:1603.0px;height:1.0px;background:#ececec"></div>
<div class="t" style="left:14.5px;top:443.0px;width:148.5px;overflow:hidden">Isoniazid</div>
<div class="t" style="left:166.5px;top:443.0px;width:147.5px;overflow:hidden">ahpC</div>
<div class="r" style="left:315.0px;top:439.0px;width:240.0px;height:26.5px;background:#00ff00"></div>
<div class="t" style="left:320.5px;top:443.0px;width:234.5px;overflow:hidden">100</div>
<div class="t" style="left:558.5px;top:443.0px;width:147.5px;overflow:hidden">37</div>
<div class="t" style="left:709.5px;top:443.0px;width:147.5px;overflow:hidden">c.-54C&gt;T</div>
<div class="t" style="left:860.5px;top:443.0px;width:148.5px;overflow:hidden">45</div>
<div class="t" style="left:1012.5px;top:443.0px;width:147.5px;overflow:hidden">100</div>
<div class="t" style="left:1163.5px;top:443.0px;width:148.5px;overflow:hidden">Uncertain signific...</div>
<div class="t" style="left:1315.5px;top:443.0px;width:147.5px;overflow:hidden">tbdb</div>
<div class="t" style="left:1466.5px;top:443.0px;width:149.5px;overflow:hidden">Mutation from li...</div>
<div class="t" style="left:11.0px;top:329.0px;width:152.0px;text-align:center;overflow:hidden">Drug</div>
<div class="t" style="left:163.0px;top:329.0px;width:151.0px;text-align:center;overflow:hidden">Gene</div>
<div class="t" style="left:314.0px;top:329.0px;width:241.0px;text-align:center;overflow:hidden">% Coverage across gene</div>
<div class="t" style="left:555.0px;top:329.0px;width:151.0px;text-align:center;overflow:hidden">Coverage</div>
<div class="t" style="left:706.0px;top:329.0px;width:151.0px;text-align:center;overflow:hidden">Mutation</div>
<div class="t" style="left:857.0px;top:329.0px;width:152.0px;text-align:center;overflow:hidden">Depth</div>
<div class="t" style="left:1009.0px;top:329.0px;width:151.0px;text-align:center;overflow:hidden">Frequency</div>
<div class="t" style="left:1160.0px;top:329.0px;width:152.0px;text-align:center;overflow:hidden">Confidence</div>
<div class="t" style="left:1312.0px;top:329.0px;width:151.0px;text-align:center;overflow:hidden">Source</div>
<div class="t" style="left:1463.0px;top:329.0px;width:153.0px;text-align:center;overflow:hidden">Comment</div>
<div class="t" style="left:11.0px;top:536.0px;transform:scaleX(1.0147);transform-origin:0 0;"><b>QC failed variants</b></div>
<div class="t" style="left:20.3px;top:577.0px;transform:scaleX(1.0146);transform-origin:0 0;">This table lists mutations in target genes that have been assigned a confidence value of <i>Assoc. w R</i> or <i>Assoc. w R – Interim</i> according to the WHO mutation catalogue 2<sup style="font-size:12px;vertical-align:0;position:relative;top:-9px">nd</sup> edition or have evidence from</div>
<div class="t" style="left:20.3px;top:601.0px;transform:scaleX(1.0293);transform-origin:0 0;">the literature but fall below the confident detection threshold. This may be due to low coverage data or a low frequency variant.</div>
<div class="r" style="left:11.0px;top:631.0px;width:1604.0px;height:174.0px;background:#fff;border:1px solid #bcbcbc"></div>
<div class="r" style="left:12.0px;top:669.0px;width:1602.0px;height:1.0px;background:#dedede"></div>
<div class="r" style="left:205.4px;top:633.0px;width:1.2px;height:171.0px;background:#e6e6e6"></div>
<div class="r" style="left:320.4px;top:633.0px;width:1.2px;height:171.0px;background:#e6e6e6"></div>
<div class="r" style="left:524.1px;top:633.0px;width:1.2px;height:171.0px;background:#e6e6e6"></div>
<div class="r" style="left:639.9px;top:633.0px;width:1.2px;height:171.0px;background:#e6e6e6"></div>
<div class="r" style="left:755.6px;top:633.0px;width:1.2px;height:171.0px;background:#e6e6e6"></div>
<div class="r" style="left:871.0px;top:633.0px;width:1.2px;height:171.0px;background:#e6e6e6"></div>
<div class="r" style="left:986.0px;top:633.0px;width:1.2px;height:171.0px;background:#e6e6e6"></div>
<div class="r" style="left:1129.6px;top:633.0px;width:1.2px;height:171.0px;background:#e6e6e6"></div>
<div class="r" style="left:1267.5px;top:633.0px;width:1.2px;height:171.0px;background:#e6e6e6"></div>
<div class="r" style="left:1382.6px;top:633.0px;width:1.2px;height:171.0px;background:#e6e6e6"></div>
<div class="r" style="left:1498.2px;top:633.0px;width:1.2px;height:171.0px;background:#e6e6e6"></div>
<div class="r" style="left:12.0px;top:696.0px;width:1602.0px;height:1.0px;background:#ececec"></div>
<div class="t" style="left:14.5px;top:674.0px;width:190.9px;overflow:hidden">Ethionamide, Isoniazid</div>
<div class="t" style="left:208.9px;top:674.0px;width:111.5px;overflow:hidden">mshA</div>
<div class="t" style="left:326.9px;top:674.0px;width:197.2px;overflow:hidden">97.1</div>
<div class="t" style="left:527.6px;top:674.0px;width:112.3px;overflow:hidden">32</div>
<div class="t" style="left:643.4px;top:674.0px;width:112.2px;overflow:hidden">c.-492G&gt;T</div>
<div class="t" style="left:759.1px;top:674.0px;width:111.9px;overflow:hidden">14</div>
<div class="t" style="left:874.5px;top:674.0px;width:111.5px;overflow:hidden">28.6</div>
<div class="t" style="left:989.5px;top:674.0px;width:140.1px;overflow:hidden">4</div>
<div class="t" style="left:1133.1px;top:674.0px;width:134.4px;overflow:hidden">0</div>
<div class="r" style="left:1499.2px;top:670.0px;width:114.8px;height:26.5px;background:#ffff00"></div>
<div class="t" style="left:1501.7px;top:674.0px;width:113.3px;overflow:hidden">soft fail</div>
<div class="r" style="left:12.0px;top:723.0px;width:1602.0px;height:1.0px;background:#ececec"></div>
<div class="t" style="left:14.5px;top:701.0px;width:190.9px;overflow:hidden">Isoniazid</div>
<div class="t" style="left:208.9px;top:701.0px;width:111.5px;overflow:hidden">katG</div>
<div class="t" style="left:326.9px;top:701.0px;width:197.2px;overflow:hidden">100</div>
<div class="t" style="left:527.6px;top:701.0px;width:112.3px;overflow:hidden">48</div>
<div class="t" style="left:643.4px;top:701.0px;width:112.2px;overflow:hidden">p.Gly206Cys</div>
<div class="t" style="left:759.1px;top:701.0px;width:111.9px;overflow:hidden">22</div>
<div class="t" style="left:874.5px;top:701.0px;width:111.5px;overflow:hidden">9.1</div>
<div class="t" style="left:989.5px;top:701.0px;width:140.1px;overflow:hidden">1</div>
<div class="t" style="left:1133.1px;top:701.0px;width:134.4px;overflow:hidden">1</div>
<div class="r" style="left:1499.2px;top:697.0px;width:114.8px;height:26.5px;background:#ffff00"></div>
<div class="t" style="left:1501.7px;top:701.0px;width:113.3px;overflow:hidden">soft fail</div>
<div class="r" style="left:12.0px;top:750.0px;width:1602.0px;height:1.0px;background:#ececec"></div>
<div class="t" style="left:14.5px;top:728.0px;width:190.9px;overflow:hidden">Isoniazid</div>
<div class="t" style="left:208.9px;top:728.0px;width:111.5px;overflow:hidden">kasA</div>
<div class="t" style="left:326.9px;top:728.0px;width:197.2px;overflow:hidden">100</div>
<div class="t" style="left:527.6px;top:728.0px;width:112.3px;overflow:hidden">35</div>
<div class="t" style="left:643.4px;top:728.0px;width:112.2px;overflow:hidden">p.Ser13Arg</div>
<div class="t" style="left:759.1px;top:728.0px;width:111.9px;overflow:hidden">30</div>
<div class="t" style="left:874.5px;top:728.0px;width:111.5px;overflow:hidden">23.3</div>
<div class="t" style="left:989.5px;top:728.0px;width:140.1px;overflow:hidden">7</div>
<div class="t" style="left:1133.1px;top:728.0px;width:134.4px;overflow:hidden">0</div>
<div class="r" style="left:1499.2px;top:724.0px;width:114.8px;height:26.5px;background:#ffff00"></div>
<div class="t" style="left:1501.7px;top:728.0px;width:113.3px;overflow:hidden">soft fail</div>
<div class="r" style="left:12.0px;top:777.0px;width:1602.0px;height:1.0px;background:#ececec"></div>
<div class="t" style="left:14.5px;top:755.0px;width:190.9px;overflow:hidden">Isoniazid</div>
<div class="t" style="left:208.9px;top:755.0px;width:111.5px;overflow:hidden">ahpC</div>
<div class="t" style="left:326.9px;top:755.0px;width:197.2px;overflow:hidden">100</div>
<div class="t" style="left:527.6px;top:755.0px;width:112.3px;overflow:hidden">37</div>
<div class="t" style="left:643.4px;top:755.0px;width:112.2px;overflow:hidden">p.Trp53Leu</div>
<div class="t" style="left:759.1px;top:755.0px;width:111.9px;overflow:hidden">32</div>
<div class="t" style="left:874.5px;top:755.0px;width:111.5px;overflow:hidden">12.5</div>
<div class="t" style="left:989.5px;top:755.0px;width:140.1px;overflow:hidden">4</div>
<div class="t" style="left:1133.1px;top:755.0px;width:134.4px;overflow:hidden">0</div>
<div class="r" style="left:1499.2px;top:751.0px;width:114.8px;height:26.5px;background:#ffff00"></div>
<div class="t" style="left:1501.7px;top:755.0px;width:113.3px;overflow:hidden">soft fail</div>
<div class="r" style="left:12.0px;top:804.0px;width:1602.0px;height:1.0px;background:#ececec"></div>
<div class="t" style="left:14.5px;top:782.0px;width:190.9px;overflow:hidden">Ethambutol</div>
<div class="t" style="left:208.9px;top:782.0px;width:111.5px;overflow:hidden">embC</div>
<div class="t" style="left:326.9px;top:782.0px;width:197.2px;overflow:hidden">100</div>
<div class="t" style="left:527.6px;top:782.0px;width:112.3px;overflow:hidden">30</div>
<div class="t" style="left:643.4px;top:782.0px;width:112.2px;overflow:hidden">p.Thr270Ile</div>
<div class="t" style="left:759.1px;top:782.0px;width:111.9px;overflow:hidden">25</div>
<div class="t" style="left:874.5px;top:782.0px;width:111.5px;overflow:hidden">100</div>
<div class="t" style="left:989.5px;top:782.0px;width:140.1px;overflow:hidden">1</div>
<div class="t" style="left:1133.1px;top:782.0px;width:134.4px;overflow:hidden">24</div>
<div class="r" style="left:1499.2px;top:778.0px;width:114.8px;height:26.5px;background:#ffff00"></div>
<div class="t" style="left:1501.7px;top:782.0px;width:113.3px;overflow:hidden">soft fail</div>
<div class="t" style="left:11.0px;top:641.0px;width:194.4px;text-align:center;overflow:hidden">Gene Associated Drugs</div>
<div class="t" style="left:205.4px;top:641.0px;width:115.0px;text-align:center;overflow:hidden">Gene</div>
<div class="t" style="left:320.4px;top:641.0px;width:203.7px;text-align:center;overflow:hidden">% Coverage across gene</div>
<div class="t" style="left:524.1px;top:641.0px;width:115.8px;text-align:center;overflow:hidden">Coverage</div>
<div class="t" style="left:639.9px;top:641.0px;width:115.7px;text-align:center;overflow:hidden">Mutation</div>
<div class="t" style="left:755.6px;top:641.0px;width:115.4px;text-align:center;overflow:hidden">Depth</div>
<div class="t" style="left:871.0px;top:641.0px;width:115.0px;text-align:center;overflow:hidden">Frequency</div>
<div class="t" style="left:986.0px;top:641.0px;width:143.6px;text-align:center;overflow:hidden"># Forward Reads</div>
<div class="t" style="left:1129.6px;top:641.0px;width:137.9px;text-align:center;overflow:hidden"># Reverse Rea...</div>
<div class="t" style="left:1267.5px;top:641.0px;width:115.1px;text-align:center;overflow:hidden">Confidence</div>
<div class="t" style="left:1382.6px;top:641.0px;width:115.6px;text-align:center;overflow:hidden">Source</div>
<div class="t" style="left:1498.2px;top:641.0px;width:116.8px;text-align:center;overflow:hidden">Comment</div>
</div>
<div class="r" style="left:2137px;top:247px;width:23px;height:136px;background:#dcdcdc"></div>
<div class="r" style="left:2137px;top:383px;width:23px;height:602px;background:#f5f5f5"></div>
<svg class="ab" style="left:2138.5px;top:228px" width="20" height="14" viewBox="0 0 20 14"><path d="M2.5 11 L10 3.5 L17.5 11" fill="none" stroke="#606060" stroke-width="1.6" stroke-linecap="round"/></svg>
<svg class="ab" style="left:2138.5px;top:989px" width="20" height="14" viewBox="0 0 20 14"><path d="M2.5 3 L10 10.5 L17.5 3" fill="none" stroke="#606060" stroke-width="1.6" stroke-linecap="round"/></svg>
<svg class="ab" style="left:1325px;top:1011px" width="22" height="6" viewBox="0 0 22 6"><circle cx="3.7" cy="3.2" r="2.1" fill="#ababab"/><circle cx="11.2" cy="3.2" r="2.1" fill="#ababab"/><circle cx="18.7" cy="3.2" r="2.1" fill="#ababab"/></svg>
<div class="r" style="left:509px;top:1018px;width:1653px;height:201px;border:1px solid #bdbdbd"></div>
<div class="ab" style="left:510px;top:1019px;width:1626px;height:199px;overflow:hidden">
<div class="t" style="left:16.6px;top:9.0px;transform:scaleX(0.9777);transform-origin:0 0;"><b>Gene QC Color Legend</b>:</div>
<div class="r" style="left:18.0px;top:33.0px;width:60.0px;height:33.0px;background:#00ff00"></div>
<div class="r" style="left:18.0px;top:69.0px;width:60.0px;height:33.0px;background:#ffff00"></div>
<div class="t" style="left:18px;top:41px;width:60px;text-align:center">Green</div>
<div class="t" style="left:18px;top:77px;width:60px;text-align:center">Yellow</div>
<div class="t" style="left:86.4px;top:41.0px;transform:scaleX(1.0151);transform-origin:0 0;">Sufficient coverage (≥ 10 reads) across ≥ 99% of gene</div>
<div class="t" style="left:86.4px;top:77.0px;transform:scaleX(1.0137);transform-origin:0 0;">Sufficient coverage (≥ 10 reads) across &lt; 99% of gene</div>
<div class="t" style="left:16.6px;top:156.0px;transform:scaleX(1.0086);transform-origin:0 0;"><b>Version and Parameters:</b></div>
<div class="t" style="left:16.6px;top:180.0px;transform:scaleX(0.9979);transform-origin:0 0;">TB-Profiler software version: 6.6.6</div>
</div>
<div class="r" style="left:2137px;top:1043px;width:23px;height:74px;background:#dcdcdc"></div>
<div class="r" style="left:2137px;top:1117px;width:23px;height:76px;background:#f5f5f5"></div>
<svg class="ab" style="left:2138.5px;top:1025px" width="20" height="14" viewBox="0 0 20 14"><path d="M2.5 11 L10 3.5 L17.5 11" fill="none" stroke="#606060" stroke-width="1.6" stroke-linecap="round"/></svg>
<svg class="ab" style="left:2138.5px;top:1199px" width="20" height="14" viewBox="0 0 20 14"><path d="M2.5 3 L10 10.5 L17.5 3" fill="none" stroke="#606060" stroke-width="1.6" stroke-linecap="round"/></svg>
<svg class="ab" style="left:516px;top:1249px" width="25" height="24" viewBox="0 0 25 24"><defs><linearGradient id="hg" x1="0" y1="0" x2="1" y2="1"><stop offset="0" stop-color="#0f3a86"/><stop offset="1" stop-color="#8fb0dc"/></linearGradient></defs><ellipse cx="12.5" cy="12" rx="11.3" ry="10.9" fill="#fff" stroke="#1b4892" stroke-width="1.9"/><ellipse cx="12.5" cy="12" rx="8.2" ry="8" fill="url(#hg)"/><path d="M10 8.2 C10.5 5.5 15.5 5.5 15.5 8.5 C15.5 11 13 11 13 14" fill="none" stroke="#fff" stroke-width="2.6"/><rect x="11.3" y="16.3" width="3" height="2.8" fill="#fff"/></svg>
<div class="r" style="left:1974px;top:1244px;width:183px;height:33px;background:#fff;border:1px solid #b9b9b9;border-radius:4px;box-shadow:inset 0 0 0 1px #e2e2e2"></div>
<svg class="ab" style="left:1998px;top:1250px" width="23" height="24" viewBox="0 0 23 24"><defs><linearGradient id="rg" x1="0" y1="0" x2="0" y2="1"><stop offset="0" stop-color="#fffcd8"/><stop offset="1" stop-color="#f4cc48"/></linearGradient></defs><path transform="translate(0.6,-0.6)" d="M8.2 6.8 L11.2 3.4 L11.8 1.2 L14.2 1.6 L14 4.4 L19.8 4.4 L21.2 6.2 L21.2 14 L19.6 12.6 L18.6 14 L18.4 10.4 L15.2 10.4 L15.2 13.6 L12.6 13.6 L12.6 10.4 L11.2 10.4 Z" fill="url(#rg)" stroke="#c47a00" stroke-width="1.3" stroke-linejoin="round"/><path transform="translate(-0.4,0.4)" d="M1.4 8.6 L2.6 10 L4.2 8.6 L4.4 11.6 L7.4 11.6 L7.4 8.8 L10 8.8 L10 11.6 L11.6 11.6 L14.6 15.6 L11.4 19 L9.6 19 L9.6 22.4 L6.6 22.4 L6.6 19 L3.4 19 L1.4 17 Z" fill="url(#rg)" stroke="#c47a00" stroke-width="1.3" stroke-linejoin="round"/></svg>
<div class="t" style="left:2027.7px;top:1252.0px;transform:scaleX(0.9914);transform-origin:0 0;">Restart Query</div></body></html>
